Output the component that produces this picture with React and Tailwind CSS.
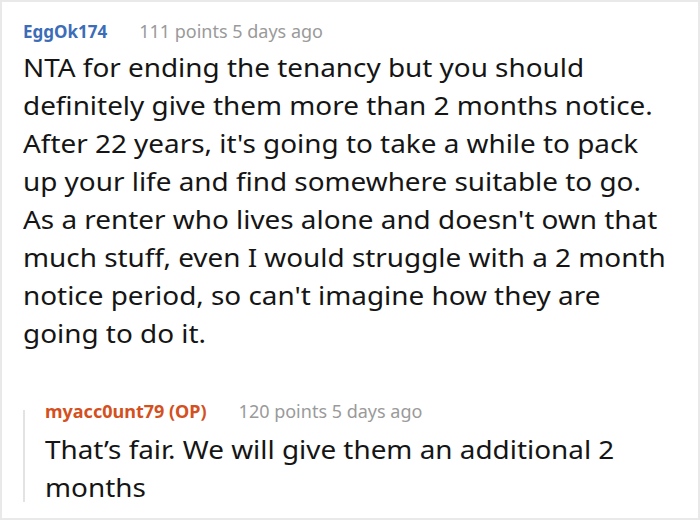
const body = [
  "NTA for ending the tenancy but you should",
  "definitely give them more than 2 months notice.",
  "After 22 years, it's going to take a while to pack",
  "up your life and find somewhere suitable to go.",
  "As a renter who lives alone and doesn't own that",
  "much stuff, even I would struggle with a 2 month",
  "notice period, so can't imagine how they are",
  "going to do it.",
];

const reply = ["That’s fair. We will give them an additional 2", "months"];

export default function App() {
  return (
    <div
      className="w-[700px] h-[520px] bg-white border-2 border-[#e9e9e9] overflow-hidden"
      style={{ fontFamily: '"Noto Sans", "Open Sans", sans-serif' }}
    >
      <div className="pl-[21px] pt-[16px]">
        <div className="flex items-baseline gap-[32px] leading-[26px]">
          <span className="font-bold text-[17px] text-[#3b6db8]">EggOk174</span>
          <span className="text-[18px] text-[#9a9a9a]">111 points 5 days ago</span>
        </div>
        <div className="mt-[3px] origin-left scale-x-[1.115] text-[25px] leading-[38px] text-[#151515]">
          {body.map((l, i) => (
            <div key={i} className="whitespace-nowrap">{l}</div>
          ))}
        </div>
        <div className="mt-[46px] flex">
          <div className="mt-[12px] w-[2px] bg-[#e3e3e3] h-[92px] shrink-0" />
          <div className="pl-[20px]">
            <div className="flex items-baseline gap-[32px] leading-[26px]">
              <span className="font-bold text-[18px] text-[#d4501e]">myacc0unt79 (OP)</span>
              <span className="text-[18px] text-[#9a9a9a]">120 points 5 days ago</span>
            </div>
            <div className="mt-[6px] origin-left scale-x-[1.115] text-[25px] leading-[38px] text-[#151515]">
              {reply.map((l, i) => (
                <div key={i} className="whitespace-nowrap">{l}</div>
              ))}
            </div>
          </div>
        </div>
      </div>
    </div>
  );
}
